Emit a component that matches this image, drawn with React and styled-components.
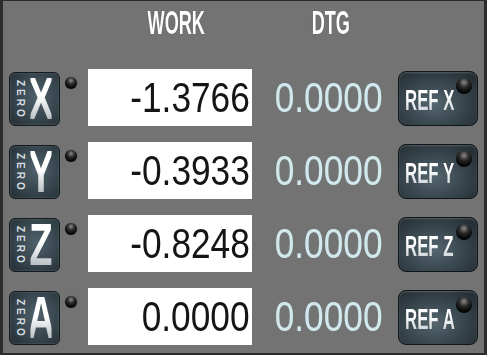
import React from "react";
import styled, { createGlobalStyle } from "styled-components";

const GlobalStyle = createGlobalStyle`
  html, body {
    margin: 0;
    padding: 0;
    background: #ffffff;
  }
`;

const axes = [
  { name: "X", work: "-1.3766", dtg: "0.0000" },
  { name: "Y", work: "-0.3933", dtg: "0.0000" },
  { name: "Z", work: "-0.8248", dtg: "0.0000" },
  { name: "A", work: "0.0000", dtg: "0.0000" },
];

const App = () => {
  return (
    <>
      <GlobalStyle />
      <Panel>
        <Header>
          <HeadCell $width={164} $left={85}>
            <Squeezed>WORK</Squeezed>
          </HeadCell>
          <HeadCell $width={146} $left={0}>
            <Squeezed>DTG</Squeezed>
          </HeadCell>
        </Header>
        <Rows>
          {axes.map((axis) => (
            <Row key={axis.name}>
              <ZeroButton>
                <ZeroLabel>ZERO</ZeroLabel>
                <AxisLetter>{axis.name}</AxisLetter>
              </ZeroButton>
              <Led />
              <WorkBox>
                <Digits>{axis.work}</Digits>
              </WorkBox>
              <DtgCell>
                <Digits $dtg>{axis.dtg}</Digits>
              </DtgCell>
              <RefButton>
                <RefText>REF {axis.name}</RefText>
                <RefLed />
              </RefButton>
            </Row>
          ))}
        </Rows>
      </Panel>
    </>
  );
};

const Panel = styled.div`
  box-sizing: border-box;
  width: 487px;
  height: 355px;
  background: #737373;
  border-style: solid;
  border-color: #2c2c2c;
  border-width: 1px 3px 2px 3px;
  padding: 0 5px 0 6px;
  font-family: "Liberation Sans", Arial, sans-serif;
`;

const Header = styled.div`
  display: flex;
  height: 68px;
  padding-top: 5px;
  box-sizing: border-box;
`;

const HeadCell = styled.div`
  width: ${(p) => p.$width}px;
  margin-left: ${(p) => p.$left}px;
  text-align: center;
  color: #ffffff;
  font-weight: bold;
  font-size: 33px;
  line-height: 34px;
  text-shadow: 0 0 1px #3a3a3a;
`;

const Squeezed = styled.span`
  display: inline-block;
  transform: scaleX(0.55);
  transform-origin: center;
`;

const Rows = styled.div`
  display: flex;
  flex-direction: column;
  gap: 16px;
`;

const Row = styled.div`
  display: flex;
  align-items: center;
  height: 57px;
`;

const ZeroButton = styled.div`
  box-sizing: border-box;
  width: 51px;
  height: 54px;
  margin-top: 2px;
  border-radius: 6px;
  border: 1.5px solid #141a1d;
  background: radial-gradient(
    ellipse at 55% 45%,
    #51626c 0%,
    #3b4a53 45%,
    #232d33 100%
  );
  box-shadow: inset 0 0 2px rgba(255, 255, 255, 0.25);
  display: flex;
  align-items: center;
  padding-left: 5px;
`;

const ZeroLabel = styled.span`
  writing-mode: vertical-rl;
  font-size: 10px;
  font-weight: bold;
  letter-spacing: 3px;
  color: #d6dde0;
  line-height: 10px;
  width: 10px;
  margin-top: 3px;
`;

const AxisLetter = styled.span`
  font-size: 59px;
  line-height: 62px;
  height: 50px;
  font-weight: bold;
  width: 32px;
  transform: scaleX(0.66);
  background: linear-gradient(#ffffff 45%, #b9c0c4 90%);
  -webkit-background-clip: text;
  background-clip: text;
  color: transparent;
  display: flex;
  align-items: center;
  justify-content: center;
  margin-top: 1px;
`;

const Led = styled.div`
  align-self: flex-start;
  width: 12px;
  height: 12px;
  margin: 8px 11px 0 5px;
  border-radius: 50%;
  background: radial-gradient(
    circle at 50% 30%,
    #8a8a8a 0%,
    #2a2a2a 35%,
    #050505 70%
  );
  box-shadow: 0 0 1px rgba(0, 0, 0, 0.6);
`;

const WorkBox = styled.div`
  box-sizing: border-box;
  width: 164px;
  height: 57px;
  background: #ffffff;
  display: flex;
  align-items: center;
  justify-content: flex-end;
  padding-right: 2px;
`;

const DtgCell = styled.div`
  box-sizing: border-box;
  width: 146px;
  height: 57px;
  display: flex;
  align-items: center;
  justify-content: flex-end;
  padding-right: 15px;
`;

const Digits = styled.span`
  display: inline-block;
  font-size: 43px;
  line-height: 57px;
  transform: scaleX(0.82);
  transform-origin: right center;
  color: ${(p) => (p.$dtg ? "#d2e8ec" : "#151515")};
  text-shadow: ${(p) => (p.$dtg ? "0 0 1px #6f8a90" : "none")};
`;

const RefButton = styled.div`
  position: relative;
  box-sizing: border-box;
  width: 80px;
  height: 55px;
  margin-top: 1px;
  border-radius: 8px;
  border: 1.5px solid #101518;
  background: radial-gradient(
    ellipse at 45% 60%,
    #55666f 0%,
    #3a4850 45%,
    #1f282d 100%
  );
  box-shadow: inset 0 1px 2px rgba(255, 255, 255, 0.2);
  display: flex;
  align-items: center;
  padding-left: 6px;
`;

const RefText = styled.span`
  display: inline-block;
  font-size: 29px;
  line-height: 34px;
  font-weight: bold;
  white-space: nowrap;
  transform: scaleX(0.58);
  transform-origin: left center;
  background: linear-gradient(#ffffff 40%, #bfc6ca 100%);
  -webkit-background-clip: text;
  background-clip: text;
  color: transparent;
  margin-top: 4px;
`;

const RefLed = styled.div`
  position: absolute;
  top: 6px;
  left: 57px;
  width: 16px;
  height: 16px;
  border-radius: 50%;
  background: radial-gradient(
    circle at 50% 28%,
    #8a8a8a 0%,
    #2a2a2a 35%,
    #050505 70%
  );
`;

export default App;
